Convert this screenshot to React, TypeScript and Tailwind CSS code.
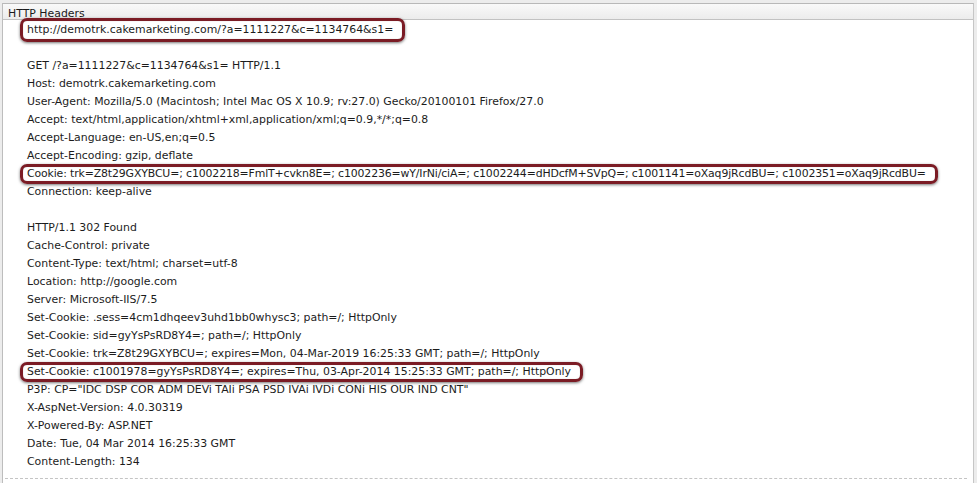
import React from "react";

const font = { fontFamily: '"DejaVu Sans", Verdana, sans-serif' };

function Hl({ children, big, cls }: { children: React.ReactNode; big?: boolean; cls?: string }) {
  return (
    <span className={"relative inline-block " + (cls ?? "")}>
      {children}
      <span
        className={
          "pointer-events-none absolute -left-[7px] -right-[12px] border-[3px] border-[#7b1c25] rounded-[7px] shadow-[0_1px_3px_rgba(0,0,0,0.55),inset_0_0_1px_rgba(0,0,0,0.3)] " +
          (big ? "-top-[3px] -bottom-[3px]" : "-top-[1px] -bottom-[1px]")
        }
      />
    </span>
  );
}

const lines: (React.ReactNode | null)[] = [
  <Hl big>http://demotrk.cakemarketing.com/?a=1111227&amp;c=1134764&amp;s1=</Hl>,
  null,
  "GET /?a=1111227&c=1134764&s1= HTTP/1.1",
  "Host: demotrk.cakemarketing.com",
  "User-Agent: Mozilla/5.0 (Macintosh; Intel Mac OS X 10.9; rv:27.0) Gecko/20100101 Firefox/27.0",
  "Accept: text/html,application/xhtml+xml,application/xml;q=0.9,*/*;q=0.8",
  "Accept-Language: en-US,en;q=0.5",
  "Accept-Encoding: gzip, deflate",
  <Hl cls="tracking-[-0.13px]">
    Cookie: trk=Z8t29GXYBCU=; c1002218=FmlT+cvkn8E=; c1002236=wY/IrNi/ciA=; c1002244=dHDcfM+SVpQ=; c1001141=oXaq9jRcdBU=; c1002351=oXaq9jRcdBU=
  </Hl>,
  "Connection: keep-alive",
  null,
  "HTTP/1.1 302 Found",
  "Cache-Control: private",
  "Content-Type: text/html; charset=utf-8",
  "Location: http://google.com",
  "Server: Microsoft-IIS/7.5",
  "Set-Cookie: .sess=4cm1dhqeev3uhd1bb0whysc3; path=/; HttpOnly",
  "Set-Cookie: sid=gyYsPsRD8Y4=; path=/; HttpOnly",
  "Set-Cookie: trk=Z8t29GXYBCU=; expires=Mon, 04-Mar-2019 16:25:33 GMT; path=/; HttpOnly",
  <Hl>Set-Cookie: c1001978=gyYsPsRD8Y4=; expires=Thu, 03-Apr-2014 15:25:33 GMT; path=/; HttpOnly</Hl>,
  'P3P: CP="IDC DSP COR ADM DEVi TAIi PSA PSD IVAi IVDi CONi HIS OUR IND CNT"',
  "X-AspNet-Version: 4.0.30319",
  "X-Powered-By: ASP.NET",
  "Date: Tue, 04 Mar 2014 16:25:33 GMT",
  "Content-Length: 134",
];

export default function App() {
  return (
    <div className="w-[977px] h-[483px] bg-[#ececec] overflow-hidden" style={font}>
      <div className="ml-[2px] mt-[3px] w-[972px] h-[480px] bg-white border-l border-t border-r border-l-[#bdbdbd] border-t-[#b8b8b8] border-r-[#c6c6c6] flex flex-col">
        <div className="h-[16px] shrink-0 bg-gradient-to-b from-[#f9f9f9] to-[#ececec] border-b border-[#c2c2c2] pl-[5px] text-[10.9px] leading-[19px] text-[#1a1a1a] overflow-visible whitespace-nowrap">
          HTTP Headers
        </div>
        <div className="pl-[24px] pt-[1px] text-[10.9px] leading-[18px] text-[#1c1c1c] whitespace-nowrap">
          {lines.map((l, i) => (
            <div key={i} className="h-[18px]">
              {l === null ? "\u00a0" : l}
            </div>
          ))}
        </div>
        <div className="mt-[7px] mx-[2px] mr-[6px] border-t border-dashed border-[#c4c4c4]" />
      </div>
    </div>
  );
}
